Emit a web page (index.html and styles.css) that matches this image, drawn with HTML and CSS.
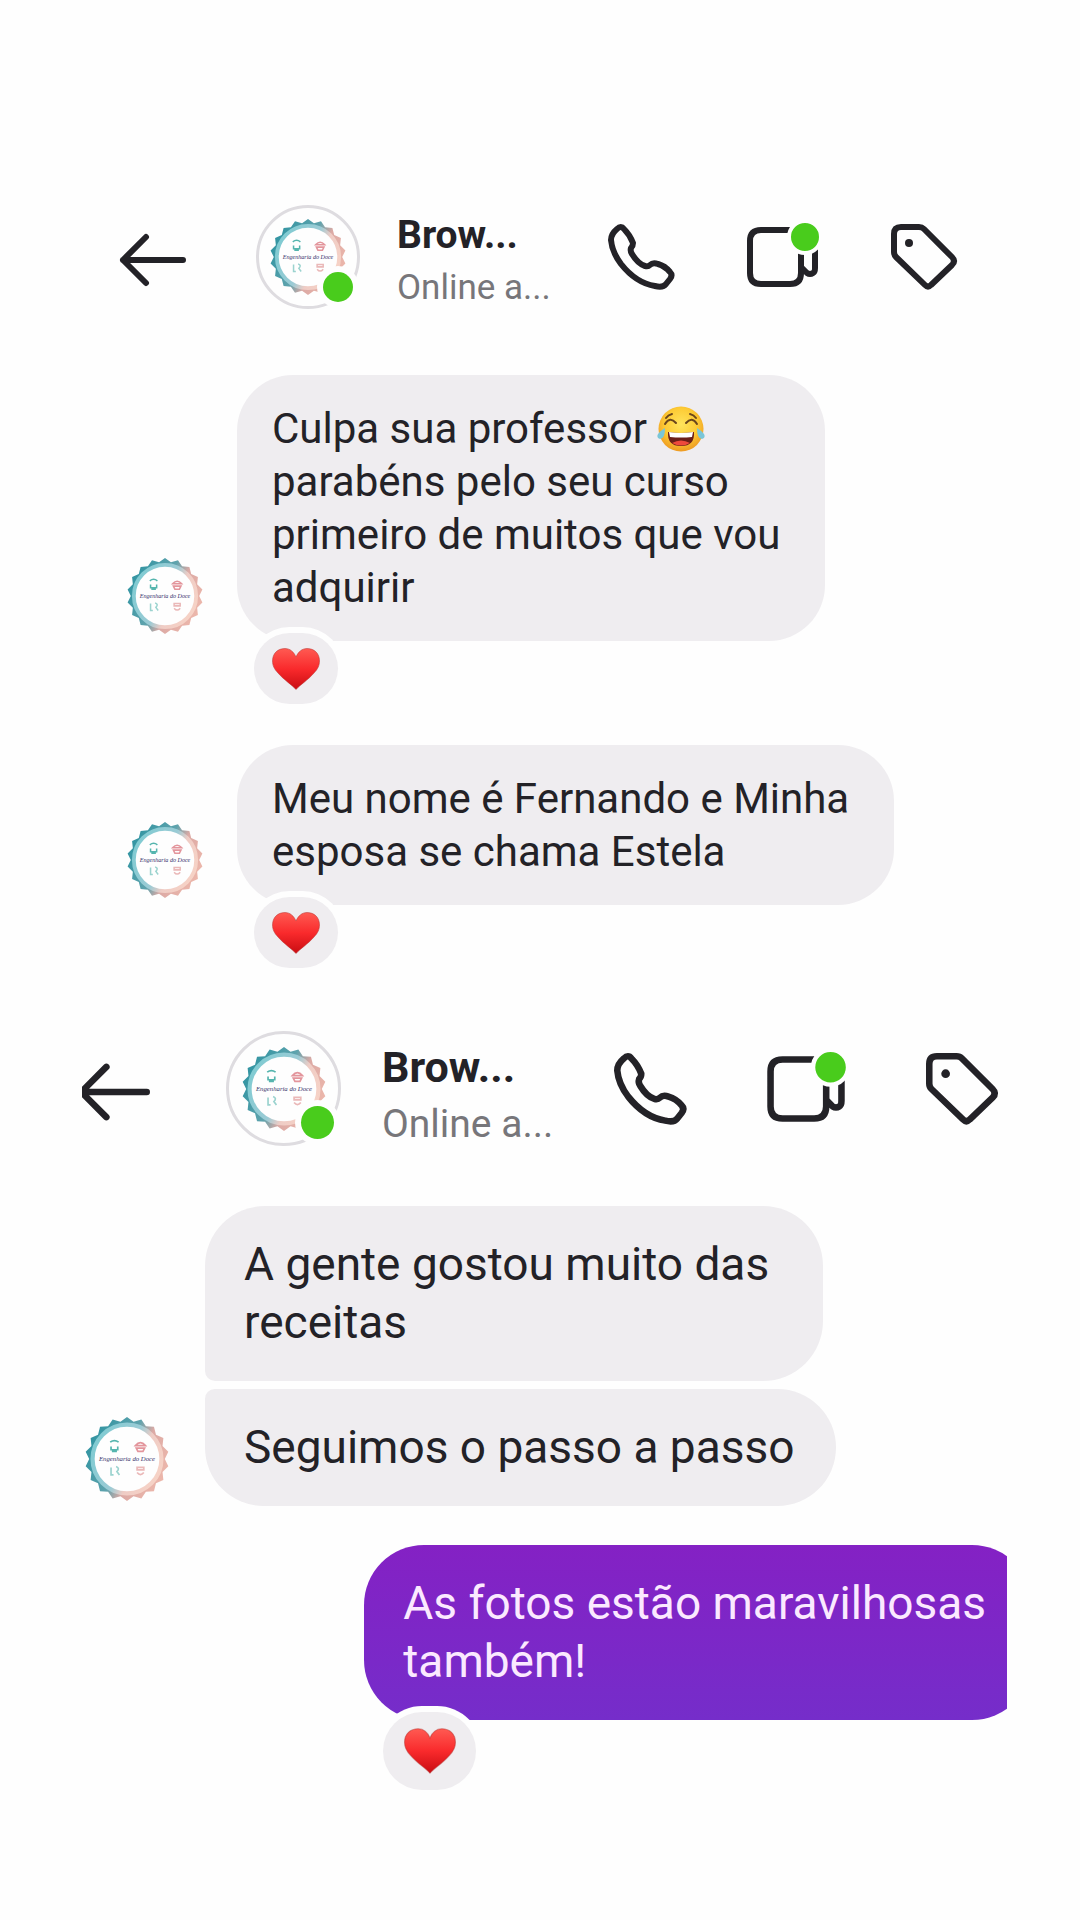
FILE: index.html
```html
<!DOCTYPE html>
<html lang="pt-BR">
<head>
  <meta charset="UTF-8">
  <meta name="viewport" content="width=device-width, initial-scale=1.0">
  <title>Conversa</title>
  <link rel="stylesheet" href="styles.css">
</head>
<body>
  <!-- shared icons -->
  <svg class="sprite" aria-hidden="true">
    <defs>
      <linearGradient id="ringColor" x1="0" y1="0.25" x2="1" y2="0.75">
        <stop offset="0" stop-color="#2d93a1"/>
        <stop offset="0.45" stop-color="#5fa3ad"/>
        <stop offset="0.62" stop-color="#dcaaa5"/>
        <stop offset="1" stop-color="#efb9ac"/>
      </linearGradient>
      <linearGradient id="ringLight" x1="0" y1="0.25" x2="1" y2="0.75">
        <stop offset="0" stop-color="#7fcbd2"/>
        <stop offset="0.48" stop-color="#9bcbd5"/>
        <stop offset="0.65" stop-color="#efccc5"/>
        <stop offset="1" stop-color="#f7d3c6"/>
      </linearGradient>
      <linearGradient id="heartColor" x1="0" y1="0" x2="0" y2="1">
        <stop offset="0" stop-color="#ff5a52"/>
        <stop offset="0.5" stop-color="#f92a2c"/>
        <stop offset="1" stop-color="#c90c12"/>
      </linearGradient>
      <radialGradient id="faceColor" cx="0.5" cy="0.4" r="0.6">
        <stop offset="0" stop-color="#ffe45c"/>
        <stop offset="0.6" stop-color="#fdcb35"/>
        <stop offset="1" stop-color="#ee9a22"/>
      </radialGradient>
    </defs>

    <symbol id="badge" viewBox="-50 -50 100 100">
      <path fill="url(#ringColor)" d="M45 0L49.2 8.7L42.3 15.4L43.3 25L34.5 28.9L32.1 38.3L22.5 39L17.1 47L7.8 44.3L0 50L-7.8 44.3L-17.1 47L-22.5 39L-32.1 38.3L-34.5 28.9L-43.3 25L-42.3 15.4L-49.2 8.7L-45 0L-49.2-8.7L-42.3-15.4L-43.3-25L-34.5-28.9L-32.1-38.3L-22.5-39L-17.1-47L-7.8-44.3L0-50L7.8-44.3L17.1-47L22.5-39L32.1-38.3L34.5-28.9L43.3-25L42.3-15.4L49.2-8.7Z"/>
      <circle r="41" fill="#fefefe" stroke="url(#ringLight)" stroke-width="5"/>
      <g fill="none" stroke-width="2">
        <path stroke="#55b5ae" d="M-20-20q5-4 10 0M-19-15v4h8v-4M-18-9h6"/>
        <path stroke="#e3959c" d="M10-16q6-7 12 0zM11-13h10l-2 4h-6z"/>
        <path stroke="#9bd3cf" d="M-19 10v9h3M-13 9q5 2 1 6l3 4"/>
        <path stroke="#eab8b8" d="M12 10h8v3h-8zM12 16q4 5 8 0"/>
      </g>
    </symbol>

    <symbol id="back" viewBox="0 0 66 52">
      <path d="M26 3L3 26l23 23M3 26h60"/>
    </symbol>
    <symbol id="phone" viewBox="0 0 66 66">
      <path d="M9 5Q13 1 16 5Q22 11 25 19Q25 22 23 24Q22 27 24 30Q30 40 37 42Q40 43 42 41Q45 38 50 40Q57 42 62 48Q65 51 62 55L58 60Q55 64 47 62Q28 59 13 40Q4 28 3 16Q3 10 9 5Z"/>
    </symbol>
    <symbol id="video" viewBox="0 0 71 66">
      <path d="M54 30V49Q54 60 43 60H14Q3 60 3 49V17Q3 6 14 6H43Q54 6 54 17V43L60 49Q63 51 66 49Q68 48 68 44V24"/>
      <circle class="dot" cx="58" cy="13" r="16"/>
    </symbol>
    <symbol id="tag" viewBox="0 0 66 66">
      <path d="M3 10Q3 3 10 3H28Q31 3 33 5L61 33Q65 37 61 41L40 61Q37 64 34 61L5 33Q3 31 3 28Z"/>
      <circle class="hole" cx="18" cy="19" r="4"/>
    </symbol>
    <symbol id="heart" viewBox="0 0 48 42">
      <path fill="url(#heartColor)" stroke="#b8302c" stroke-opacity="0.5" d="M24 41.5C20 37 12 32 6 25C2 21 .5 17 .5 13C.5 5 6 .5 13 .5C18 .5 22 4 24 9C26 4 30 .5 35 .5C42 .5 47.5 5 47.5 13C47.5 17 46 21 42 25C36 32 28 37 24 41.5Z"/>
    </symbol>
    <symbol id="joy" viewBox="0 0 48 48">
      <circle cx="24" cy="24" r="22.5" fill="url(#faceColor)"/>
      <path d="M8 19q5-8 11-1M29 18q6-7 11 1M9 13q2-3 6-4M33 9q4 1 6 4" fill="none" stroke="#6b461c" stroke-width="2" stroke-linecap="round"/>
      <path d="M11 27q13 2 26 0q1 14-13 14T11 27z" fill="#6b1f18"/>
      <path d="M12 27q12 2 24 0l-1 5q-11 1-22 0z" fill="#fff"/>
      <path d="M15 38q9-5 18 0q-9 5-18 0z" fill="#ee4a3c"/>
      <path d="M8 23q0 11-5 11q-4-1-2-5q2-3 7-6zM40 23q0 11 5 11q4-1 2-5q-2-3-7-6z" fill="#7ac6d8"/>
    </symbol>
  </svg>

  <main class="page">
    <section class="chat">
      <header class="chat-header">
        <button class="icon-button back" aria-label="Voltar"><svg><use href="#back"/></svg></button>
        <div class="profile">
          <svg viewBox="0 0 100 100"><use href="#badge"/><text class="badge-text" x="50" y="52">Engenharia do Doce</text></svg>
          <span class="status"></span>
        </div>
        <div class="contact">
          <h2>Brow...</h2>
          <p>Online a...</p>
        </div>
        <div class="actions">
          <button class="icon-button" aria-label="Ligar"><svg><use href="#phone"/></svg></button>
          <button class="icon-button video" aria-label="Chamada de vídeo"><svg><use href="#video"/></svg></button>
          <button class="icon-button" aria-label="Etiqueta"><svg><use href="#tag"/></svg></button>
        </div>
      </header>

      <div class="message">
        <svg class="avatar" viewBox="0 0 100 100"><use href="#badge"/><text class="badge-text" x="50" y="52">Engenharia do Doce</text></svg>
        <div class="bubble">
          Culpa sua professor <svg class="emoji" role="img" aria-label="rindo"><use href="#joy"/></svg><br>
          parabéns pelo seu curso<br>
          primeiro de muitos que vou<br>
          adquirir
          <span class="reaction"><svg><use href="#heart"/></svg></span>
        </div>
      </div>

      <div class="message">
        <svg class="avatar" viewBox="0 0 100 100"><use href="#badge"/><text class="badge-text" x="50" y="52">Engenharia do Doce</text></svg>
        <div class="bubble">
          Meu nome é Fernando e Minha<br>
          esposa se chama Estela
          <span class="reaction"><svg><use href="#heart"/></svg></span>
        </div>
      </div>
    </section>

    <section class="chat large">
      <header class="chat-header">
        <button class="icon-button back" aria-label="Voltar"><svg><use href="#back"/></svg></button>
        <div class="profile">
          <svg viewBox="0 0 100 100"><use href="#badge"/><text class="badge-text" x="50" y="52">Engenharia do Doce</text></svg>
          <span class="status"></span>
        </div>
        <div class="contact">
          <h2>Brow...</h2>
          <p>Online a...</p>
        </div>
        <div class="actions">
          <button class="icon-button" aria-label="Ligar"><svg><use href="#phone"/></svg></button>
          <button class="icon-button video" aria-label="Chamada de vídeo"><svg><use href="#video"/></svg></button>
          <button class="icon-button" aria-label="Etiqueta"><svg><use href="#tag"/></svg></button>
        </div>
      </header>

      <div class="message-group">
        <div class="bubble first">
          A gente gostou muito das<br>
          receitas
        </div>
        <div class="message">
          <svg class="avatar" viewBox="0 0 100 100"><use href="#badge"/><text class="badge-text" x="50" y="52">Engenharia do Doce</text></svg>
          <div class="bubble last">Seguimos o passo a passo</div>
        </div>
      </div>

      <div class="message sent">
        <div class="bubble">
          As fotos estão maravilhosas<br>
          também!
          <span class="reaction"><svg><use href="#heart"/></svg></span>
        </div>
      </div>
    </section>
  </main>
</body>
</html>
```

FILE: styles.css
```css
* {
  box-sizing: border-box;
}

body {
  margin: 0;
  background: #fefefe;
  color: #232227;
  font-family: Roboto, "Liberation Sans", sans-serif;
}

h2, p {
  margin: 0;
}

svg {
  display: block;
}

symbol {
  overflow: visible;
}

.sprite {
  position: absolute;
  width: 0;
  height: 0;
}

.page {
  padding: 205px 73px 120px 82px;
}

.chat {
  --profile: 104px;
  --badge: 76px;
  --icon: 66px;
  --video: 71px;
  --status: 30px;
  --text: 42px;
  --line: 53px;
  --pad: 27px 45px 27px 35px;
  --radius: 56px;
  --avatar-gap: 34px;
}

.chat.large {
  --profile: 115px;
  --badge: 84px;
  --icon: 72px;
  --video: 78px;
  --status: 33px;
  --text: 46px;
  --line: 58px;
  --pad: 29px 42px 30px 39px;
  --radius: 60px;
  --avatar-gap: 36px;
  margin-top: 126px;
  padding-bottom: 80px;
  overflow: hidden;
}

/* header */
.chat-header {
  display: flex;
  align-items: center;
  padding: 0 50px 0 38px;
}

.large .chat-header {
  padding: 0 9px 0 0;
}

.icon-button {
  width: var(--icon);
  height: var(--icon);
  padding: 0;
  border: none;
  background: none;
  cursor: pointer;
}

.icon-button.video {
  width: var(--video);
}

.icon-button svg {
  width: 100%;
  height: 100%;
  overflow: visible;
  fill: none;
  stroke: #232227;
  stroke-width: 6;
  stroke-linecap: round;
  stroke-linejoin: round;
}

.dot {
  fill: #49cc1c;
  stroke: #fefefe;
  stroke-width: 4;
}

.hole {
  fill: #232227;
  stroke: none;
}

.back {
  margin-top: 6px;
  margin-right: 70px;
}

/* the arrow tip runs under the edge of the section */
.large .back {
  margin-left: -4px;
  margin-right: 76px;
}

.profile {
  position: relative;
  display: flex;
  align-items: center;
  justify-content: center;
  width: var(--profile);
  height: var(--profile);
  margin-right: 37px;
  border: 3px solid #dedce0;
  border-radius: 50%;
}

.large .profile {
  margin-right: 41px;
}

.profile svg {
  width: var(--badge);
  height: var(--badge);
}

.status {
  position: absolute;
  right: 4px;
  bottom: 4px;
  width: var(--status);
  height: var(--status);
  background: #49cc1c;
  border-radius: 50%;
  box-shadow: 0 0 0 6px #fefefe;
}

.contact {
  padding-top: 8px;
}

.contact h2 {
  font-size: 39px;
  line-height: 44px;
  font-weight: 700;
}

.contact p {
  margin-top: 10px;
  color: #77767a;
  font-size: 35px;
  line-height: 42px;
}

.large .contact {
  padding-top: 10px;
}

.large .contact h2 {
  font-size: 43px;
  line-height: 50px;
}

.large .contact p {
  font-size: 39px;
  line-height: 44px;
}

.actions {
  display: flex;
  gap: 73px;
  margin-left: auto;
}

.large .actions {
  gap: 81px;
}

/* messages */
.message {
  display: flex;
  align-items: flex-end;
  gap: var(--avatar-gap);
  margin-top: 104px;
  padding-left: 45px;
}

.chat-header + .message {
  margin-top: 66px;
}

.large .message {
  margin-top: 8px;
  padding-left: 3px;
}

.message-group {
  margin-top: 60px;
}

.avatar {
  flex: none;
  width: var(--badge);
  height: var(--badge);
  margin-bottom: 7px;
}

.large .avatar {
  margin-bottom: 5px;
}

.badge-text {
  fill: #35306a;
  font-family: "Liberation Serif", "Times New Roman", serif;
  font-size: 8px;
  font-style: italic;
  text-anchor: middle;
}

.bubble {
  position: relative;
  width: fit-content;
  padding: var(--pad);
  background: #efedf0;
  border-radius: var(--radius);
  font-size: var(--text);
  line-height: var(--line);
  white-space: nowrap;
}

.bubble.first {
  margin-left: 123px;
  padding-right: 54px;
  border-bottom-left-radius: 10px;
}

.bubble.last {
  border-top-left-radius: 10px;
}

.large .message.sent {
  justify-content: flex-end;
  margin-top: 39px;
  margin-right: -25px;
}

.sent .bubble {
  padding-right: 46px;
  background: linear-gradient(#8421c4, #752dca);
  color: #fbe9ff;
}

.emoji {
  display: inline-block;
  width: 48px;
  height: 48px;
  vertical-align: -10px;
}

.reaction {
  position: absolute;
  left: 17px;
  top: calc(100% - 8px);
  display: flex;
  align-items: center;
  justify-content: center;
  width: 84px;
  height: 71px;
  background: #efedf0;
  border-radius: 36px;
  box-shadow: 0 0 0 6px #fefefe;
}

.reaction svg {
  width: 48px;
  height: 42px;
}

.large .reaction {
  left: 19px;
  width: 93px;
  height: 78px;
  border-radius: 40px;
}

.large .reaction svg {
  width: 52px;
  height: 46px;
}
```
